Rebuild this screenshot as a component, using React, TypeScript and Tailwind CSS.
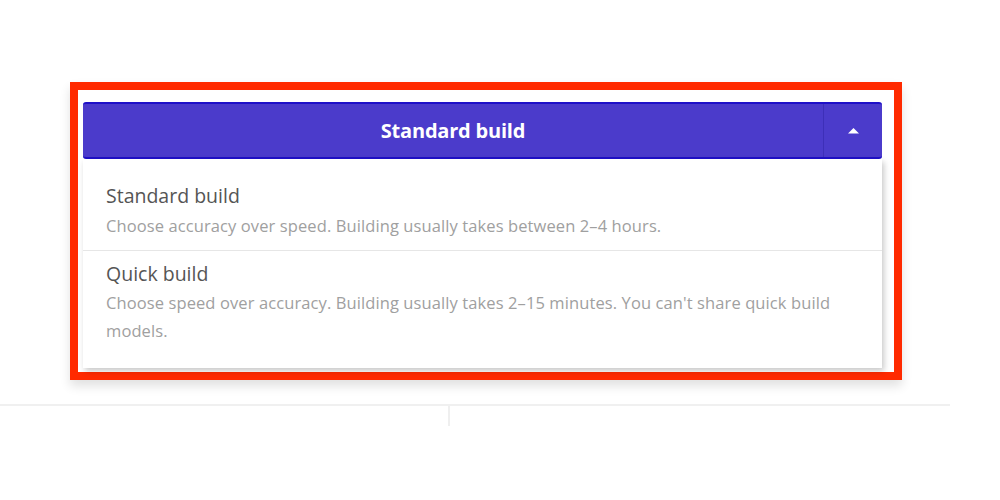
import React, { useState } from 'react';

const options = [
  {
    title: 'Standard build',
    desc: 'Choose accuracy over speed. Building usually takes between 2–4 hours.',
  },
  {
    title: 'Quick build',
    desc: "Choose speed over accuracy. Building usually takes 2–15 minutes. You can't share quick build models.",
  },
];

const App = () => {
  const [selected] = useState(0);

  return (
    <div className="w-[1000px] h-[500px] bg-white overflow-hidden font-['Open_Sans',sans-serif]">
      <div className="pt-[82px] pl-[70px]">
        <div className="w-[832px] h-[298px] border-8 border-[#ff2a00] bg-white pt-[12px] pl-[5px] pr-[12px] shadow-[0_6px_10px_rgba(0,0,0,0.12)]">
          <button className="w-full h-[57px] flex items-stretch rounded-[3px] bg-[#4b3bcb] border-y-2 border-[#1f10c8] text-white">
            <span className="flex-1 flex items-center justify-center text-[20px] font-bold tracking-[-0.2px]">
              {options[selected].title}
            </span>
            <span className="w-[59px] flex items-center justify-center border-l border-[#3d2fb8]">
              <svg width="13" height="7" viewBox="0 0 13 7">
                <path d="M1 6.5 L6.5 1 L12 6.5 Z" fill="#fff" />
              </svg>
            </span>
          </button>
          <div className="bg-white shadow-[2px_3px_6px_rgba(0,0,0,0.22)] py-3">
            {options.map((o, i) => (
              <div
                key={o.title}
                className={
                  i === 0
                    ? 'pt-[13px] pb-[10px] pl-[23px] pr-[36px] border-b border-[#e6e6e6]'
                    : 'pt-[11px] pb-[11px] pl-[23px] pr-[36px]'
                }
              >
                <div className="text-[19.5px] leading-[24px] text-[#555]">{o.title}</div>
                <div className={(i === 0 ? 'mt-1' : 'mt-[3px]') + ' text-[16.5px] tracking-[0.1px] leading-[28px] text-[#a0a0a0]'}>
                  {o.desc}
                </div>
              </div>
            ))}
          </div>
        </div>
      </div>
      <div className="mt-[24px] w-[950px] border-t-2 border-[#f0f0f0] flex">
        <div className="w-[450px] h-[20px] border-r-2 border-[#efefef]" />
      </div>
    </div>
  );
};

export default App;
